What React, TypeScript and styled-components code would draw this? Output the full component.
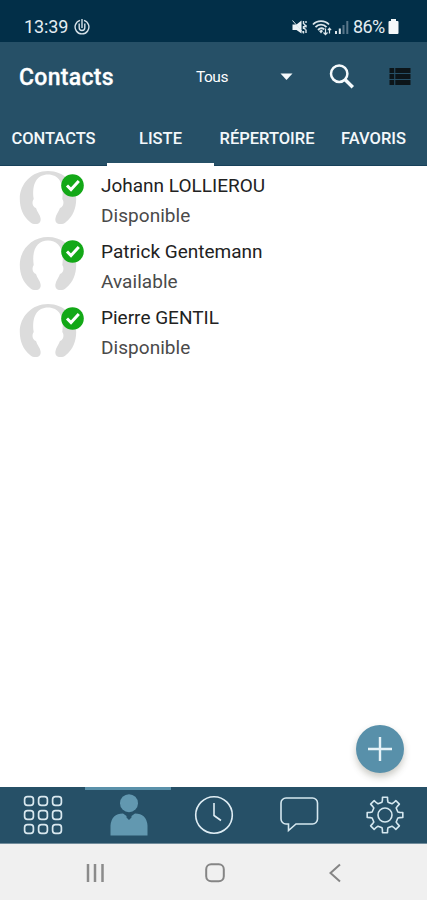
import React from "react";
import styled, { createGlobalStyle } from "styled-components";

const GlobalStyle = createGlobalStyle`
  * { box-sizing: border-box; }
  body { margin: 0; background: #fff; font-family: Roboto, sans-serif; }
`;

const Screen = styled.div`
  width: 427px;
  height: 900px;
  display: flex;
  flex-direction: column;
  overflow: hidden;
  background: #fff;
`;

const StatusBar = styled.div`
  height: 42px;
  flex: none;
  display: flex;
  align-items: center;
  justify-content: space-between;
  padding: 12px 28px 0 24px;
  background: #022f48;
  color: #e4edf2;
`;

const StatusGroup = styled.div<{ $gap: number }>`
  display: flex;
  align-items: center;
  gap: ${(p) => p.$gap}px;
`;

const StatusText = styled.span<{ $spacing: number }>`
  font-size: 18px;
  line-height: 20px;
  letter-spacing: ${(p) => p.$spacing}px;
`;

const Header = styled.header`
  height: 124px;
  flex: none;
  background: #265067;
  color: #fff;
`;

const TitleRow = styled.div`
  height: 70px;
  display: flex;
  align-items: center;
  padding: 0 16px 0 19px;
`;

const Title = styled.h1`
  margin: 0;
  padding-top: 2px;
  width: 177px;
  font-size: 23px;
  line-height: 28px;
  font-weight: 500;
  letter-spacing: 0.3px;
  -webkit-text-stroke: 0.3px #fff;
`;

const Filter = styled.div`
  width: 97px;
  margin-right: 36px;
  display: flex;
  align-items: center;
  justify-content: space-between;
  font-size: 15.5px;
  letter-spacing: -0.5px;
`;

const SearchSlot = styled.div`
  width: 60px;
  display: flex;
`;

const Tabs = styled.nav`
  height: 54px;
  display: grid;
  grid-template-columns: 107px 107px 106px 107px;
  border-bottom: 1px solid #17415a;
`;

const Tab = styled.div<{ $active?: boolean }>`
  height: 54px;
  display: flex;
  align-items: center;
  justify-content: center;
  padding-top: 2px;
  border-bottom: 3px solid ${(p) => (p.$active ? "#fff" : "transparent")};
  font-size: 16.5px;
  font-weight: 500;
  white-space: nowrap;
  color: #f3f8fb;
`;

const List = styled.main`
  flex: 1;
  position: relative;
  padding-top: 2px;
`;

const Contact = styled.div`
  height: 66.4px;
  display: flex;
`;

const AvatarSlot = styled.div`
  width: 101px;
  padding: 1px 0 0 19px;
`;

const Lines = styled.div`
  padding-top: 2.6px;
  font-size: 19px;
  line-height: 30px;
  white-space: nowrap;
`;

const Name = styled.div`
  color: #222;
`;

const Presence = styled.div`
  color: #4a4a4a;
  letter-spacing: 0.05px;
`;

const AddButton = styled.button`
  position: absolute;
  right: 23px;
  bottom: 14px;
  width: 48px;
  height: 48px;
  padding: 0;
  border: 0;
  border-radius: 50%;
  display: flex;
  align-items: center;
  justify-content: center;
  background: #5890aa;
  box-shadow: 0 4px 7px rgba(60, 60, 40, 0.28);
`;

const BottomNav = styled.nav`
  height: 57px;
  flex: none;
  display: grid;
  grid-template-columns: repeat(5, 1fr);
  background: #265067;
  border-bottom: 1px solid #718c9b;
`;

const NavItem = styled.div<{ $active?: boolean }>`
  display: flex;
  align-items: center;
  justify-content: center;
  border-top: 3px solid ${(p) => (p.$active ? "#5a91aa" : "transparent")};
  padding: 0 0 3px 1px;
`;

const SystemBar = styled.div`
  height: 56px;
  flex: none;
  display: grid;
  grid-template-columns: 35px 120px 120px 120px;
  background: #f0f0f0;
`;

const SystemKey = styled.div`
  display: flex;
  align-items: center;
  justify-content: center;
  padding-top: 2px;
`;

const UpdateIcon = () => (
  <svg width="16" height="16" viewBox="0 0 16 16" fill="none" stroke="#d5e1e8">
    <path d="M6 1.4A6.9 6.9 0 1 0 10 1.4M5.2 4.5v4.2a2.8 2.8 0 0 0 5.6 0V4.5M8 0v9" strokeWidth="1.4" />
  </svg>
);

const MuteIcon = () => (
  <svg width="16" height="16" viewBox="0 0 16 16">
    <path d="M0.5 5.5h4L9.5 1.500v13L4.5 11h-4z" fill="#edf3f6" />
    <path d="M0.500 1.500l11 12.500" stroke="#dce6eb" strokeWidth="1" />
    <path d="M11.500 2v3m0 2v3m0 2v2.500M14 2v2m0 2v2.500m0 2V14M11.500 4.500l2 2-2 2 2 2" fill="none" stroke="#dce6eb" strokeWidth="1.400" />
  </svg>
);

const WifiIcon = () => (
  <svg width="20" height="17" viewBox="0 0 20 17" fill="none" stroke="#dce6eb">
    <path d="M1 5.5C5 1 13 1 17 5.5M3.5 8.2c3-3.4 8-3.4 11 0M6 11c2-2 4.500-2 6.300-.6" strokeWidth="1.8" />
    <path d="M7 12l2.500-1.300 1.500 1.300-2 2.500z" fill="#dce6eb" stroke="none" />
    <path d="M13.500 15.500V9.500m-2 4 2 2.200 2-2.200M17.500 9.500v5m-1.600-3.400 1.600-2 1.600 2" strokeWidth="1.2" />
  </svg>
);

const SignalIcon = () => (
  <svg width="14" height="15" viewBox="0 0 14 15">
    <path d="M0 11h2v3H0zM3.800 8.500h2V14h-2z" fill="#dce6eb" />
    <path d="M7.500 5h2v9h-2zM11.300 1h2v13h-2z" fill="#587689" />
  </svg>
);

const BatteryIcon = () => (
  <svg width="11" height="16" viewBox="0 0 11 16">
    <path d="M3 0h5v2h1.500a1 1 0 0 1 1 1v11a1 1 0 0 1-1 1h-8a1 1 0 0 1-1-1V3a1 1 0 0 1 1-1H3z" fill="#f4f8fa" />
  </svg>
);

const SearchIcon = () => (
  <svg width="26" height="26" viewBox="0 0 26 26" fill="none" stroke="#f5fafc">
    <circle cx="10.200" cy="9.700" r="8.200" strokeWidth="2.500" />
    <path d="M16.200 15.700l7.600 7.600" strokeWidth="3.400" />
  </svg>
);

const ViewListIcon = () => (
  <svg width="22" height="18" viewBox="0 0 22 18" fill="#0c1519">
    <path d="M0.500 0h4.700v5H0.500zM6.300 0h15.200v5H6.300zM0.500 6h4.700v5H0.500zM6.300 6h15.200v5H6.300zM0.500 12h4.700v5H0.500zM6.300 12h15.200v5H6.300z" />
  </svg>
);

const Avatar = () => (
  <svg width="66" height="58" viewBox="0 0 66 58">
    <path
      d="M11 53C4 47.500 0.800 39 0.800 30C0.800 14.500 13 2 29 2C45 2 57.200 14.500 57.200 30C57.200 39 54 47.500 47 53C44.500 55.500 40.500 55.500 38.500 54.500C36.500 53.500 36 51 36.500 49C37 45.500 39.500 43 41 39C44.500 38 45.500 33 43.300 30C45.500 14 39.500 5.500 29 5.500C18.500 5.500 12.500 14 14.700 30C12.500 33 13.500 38 17 39C18 43 21 45.500 21.500 49C22 51 21.500 53.500 19.500 54.500C17.500 55.500 13.500 55.500 11 53Z"
      fill="#dcdcdc"
    />
    <circle cx="53.500" cy="16.500" r="11.300" fill="#13a817" />
    <path d="M48 16.500l4 4 7.800-8.500" fill="none" stroke="#fff" strokeWidth="3" />
  </svg>
);

const KeypadIcon = () => (
  <svg width="40" height="40" viewBox="0 0 40 40" fill="none" stroke="#d9e8ef" strokeWidth="1.700">
    {[6, 20, 34].map((y) =>
      [6, 20, 34].map((x) => <rect key={`${x}-${y}`} x={x - 4.4} y={y - 4.4} width="8.800" height="8.800" rx="2.800" />),
    )}
  </svg>
);

const PersonIcon = () => (
  <svg width="38" height="42" viewBox="0 0 38 42" fill="#6298b0">
    <circle cx="19" cy="9.200" r="9" />
    <path d="M0.500 41.500V31.500Q1.500 19.500 13 19.500L16.500 22V23.500L19 26L21.500 23.500V22L25 19.500Q36.500 19.500 37.500 31.500V41.500Z" />
  </svg>
);

const ClockIcon = () => (
  <svg width="40" height="40" viewBox="0 0 40 40" fill="none" stroke="#dfedf4" strokeWidth="1.600">
    <circle cx="20" cy="20" r="18.300" />
    <path d="M20 8v12.500l7 5" />
  </svg>
);

const ChatIcon = () => (
  <svg width="40" height="38" viewBox="0 0 40 38" fill="none" stroke="#d5e7ef" strokeWidth="1.600">
    <path d="M7 2h26.500a5 5 0 0 1 5 5v16a5 5 0 0 1-5 5H17L9.500 34.500V28H7a5 5 0 0 1-5-5V7a5 5 0 0 1 5-5z" />
  </svg>
);

const toothPath = (() => {
  const steps: [number, number][] = [[-22.5, 13], [-13, 13.2], [-10, 15], [-8, 18], [8, 18], [10, 15], [13, 13.2]];
  const points: string[] = [];
  for (let tooth = 0; tooth < 8; tooth++) {
    for (const [offset, radius] of steps) {
      const angle = ((tooth * 45 + offset) * Math.PI) / 180;
      points.push(`${(20 + radius * Math.sin(angle)).toFixed(2)} ${(20 - radius * Math.cos(angle)).toFixed(2)}`);
    }
  }
  return `M${points.join("L")}Z`;
})();

const GearIcon = () => (
  <svg width="40" height="40" viewBox="0 0 40 40" fill="none" stroke="#d5e7ef" strokeWidth="1.600" strokeLinejoin="round">
    <path d={toothPath} />
    <circle cx="20" cy="20" r="7" />
  </svg>
);

const contacts = [
  { name: "Johann LOLLIEROU", presence: "Disponible" },
  { name: "Patrick Gentemann", presence: "Available" },
  { name: "Pierre GENTIL", presence: "Disponible" },
];

export default function App() {
  return (
    <>
      <GlobalStyle />
      <Screen>
        <StatusBar>
          <StatusGroup $gap={6}>
            <StatusText $spacing={-0.1}>13:39</StatusText>
            <UpdateIcon />
          </StatusGroup>
          <StatusGroup $gap={3.5}>
            <MuteIcon />
            <WifiIcon />
            <SignalIcon />
            <StatusText $spacing={-0.6}>86%</StatusText>
            <BatteryIcon />
          </StatusGroup>
        </StatusBar>
        <Header>
          <TitleRow>
            <Title>Contacts</Title>
            <Filter>
              <span>Tous</span>
              <svg width="13" height="8" viewBox="0 0 13 8">
                <path d="M0.500 0.500h12L6.500 7z" fill="#f5fafc" />
              </svg>
            </Filter>
            <SearchSlot>
              <SearchIcon />
            </SearchSlot>
            <ViewListIcon />
          </TitleRow>
          <Tabs>
            <Tab>CONTACTS</Tab>
            <Tab $active>LISTE</Tab>
            <Tab>RÉPERTOIRE</Tab>
            <Tab>FAVORIS</Tab>
          </Tabs>
        </Header>
        <List>
          {contacts.map((c) => (
            <Contact key={c.name}>
              <AvatarSlot>
                <Avatar />
              </AvatarSlot>
              <Lines>
                <Name>{c.name}</Name>
                <Presence>{c.presence}</Presence>
              </Lines>
            </Contact>
          ))}
          <AddButton aria-label="Ajouter">
            <svg width="26" height="26" viewBox="0 0 26 26" stroke="#e6f3f8" strokeWidth="2.400">
              <path d="M13 1v24M1 13h24" />
            </svg>
          </AddButton>
        </List>
        <BottomNav>
          <NavItem><KeypadIcon /></NavItem>
          <NavItem $active><PersonIcon /></NavItem>
          <NavItem><ClockIcon /></NavItem>
          <NavItem><ChatIcon /></NavItem>
          <NavItem><GearIcon /></NavItem>
        </BottomNav>
        <SystemBar>
          <span />
          <SystemKey>
            <svg width="20" height="20" viewBox="0 0 20 20" stroke="#8b8b8b" strokeWidth="2.500">
              <path d="M3 1v18M10 1v18M17.500 1v18" />
            </svg>
          </SystemKey>
          <SystemKey>
            <svg width="20" height="20" viewBox="0 0 20 20" fill="none" stroke="#858585" strokeWidth="2">
              <rect x="1.200" y="1.200" width="17.600" height="17" rx="5" />
            </svg>
          </SystemKey>
          <SystemKey>
            <svg width="20" height="20" viewBox="0 0 20 20" fill="none" stroke="#858585" strokeWidth="2">
              <path d="M15 1.500L5.500 10L15 18.500" />
            </svg>
          </SystemKey>
        </SystemBar>
      </Screen>
    </>
  );
}
